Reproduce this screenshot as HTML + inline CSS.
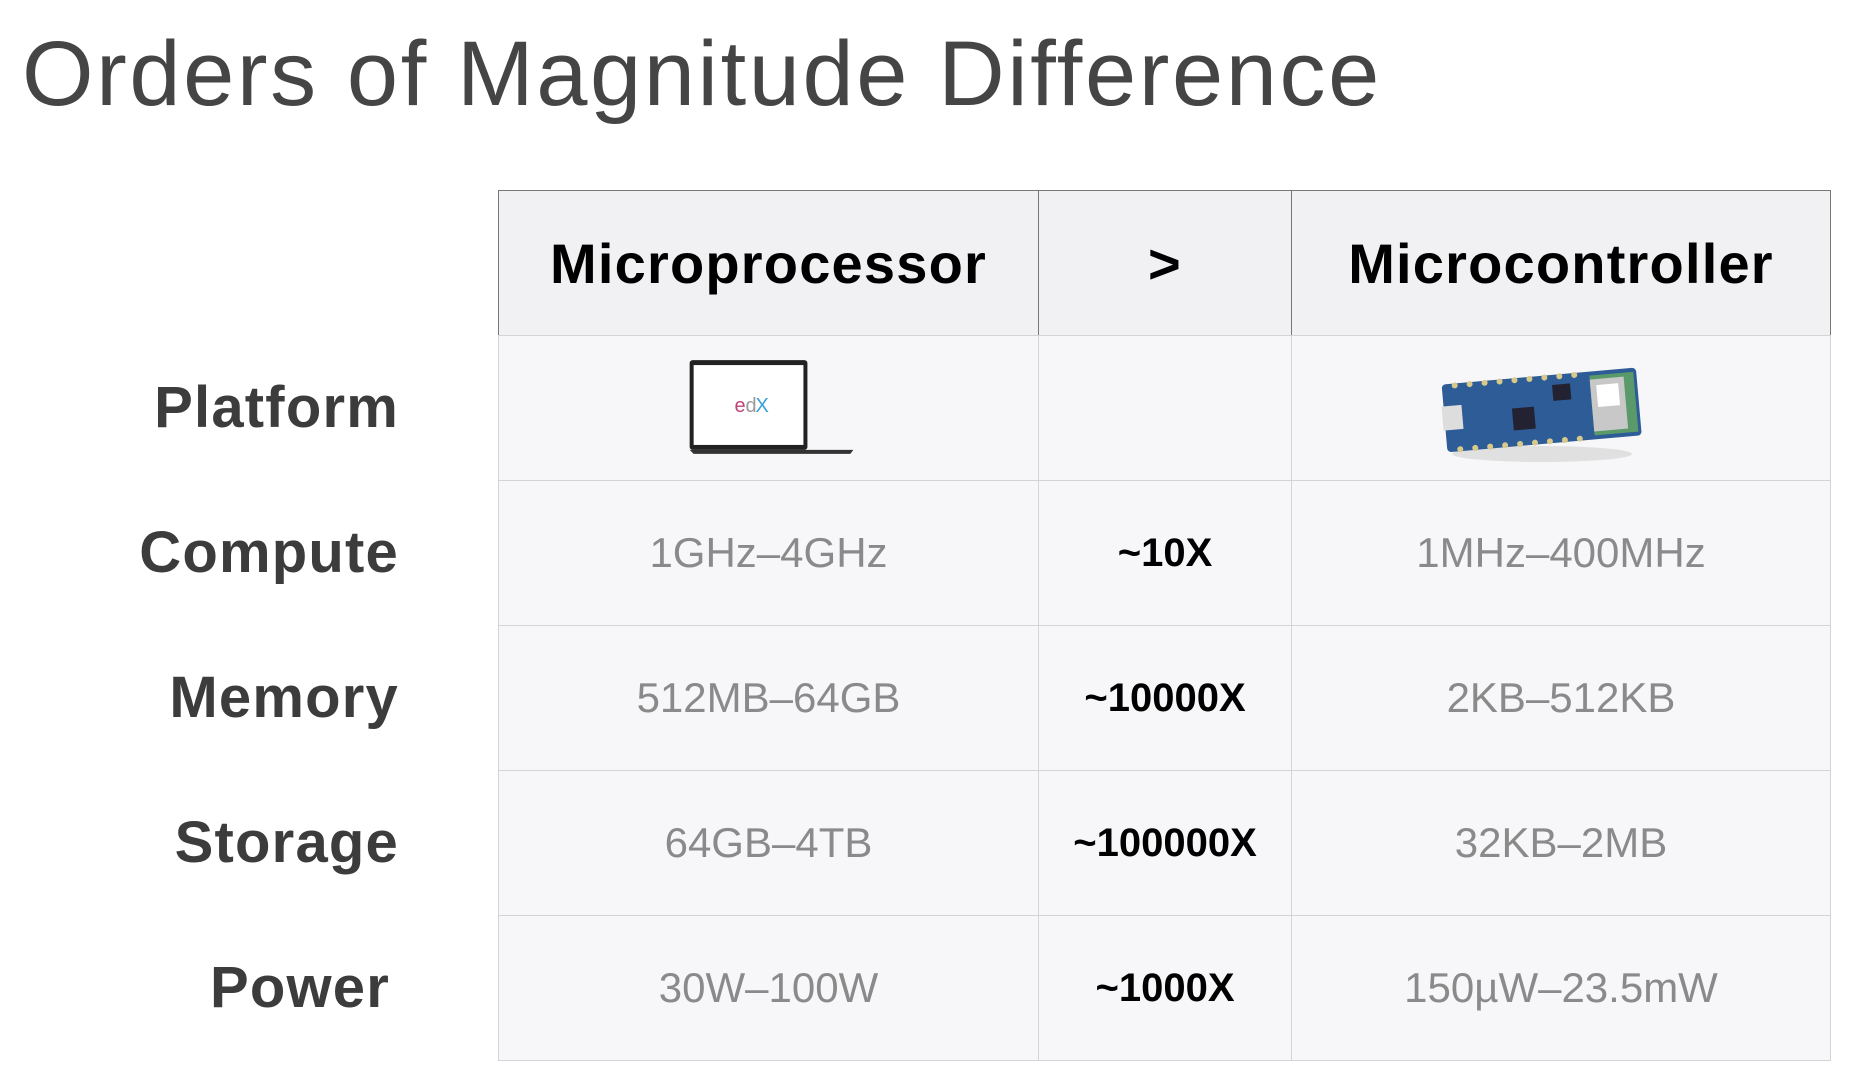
<!DOCTYPE html>
<html><head><meta charset="utf-8"><style>
*{margin:0;padding:0;box-sizing:border-box}
body{width:1867px;height:1088px;background:#fff;position:relative;overflow:hidden;font-family:"Liberation Sans",sans-serif}
.title{position:absolute;left:22px;top:22px;font-size:92px;color:#454545;letter-spacing:2.6px;white-space:nowrap}
.lbl{position:absolute;right:1468px;font-size:58px;font-weight:bold;color:#3c3c3c;height:145px;line-height:145px;letter-spacing:1.2px}
.c{position:absolute;display:flex;align-items:center;justify-content:center;background:#f7f7f9;border:1px solid #d4d4d6;font-size:42px;color:#8a8a8a}
.h{background:#f1f1f3;font-size:56px;font-weight:bold;color:#000;border:1px solid #777;letter-spacing:1.2px}
.m{color:#000;font-weight:bold;font-size:40px}
</style></head><body>
<div class="title">Orders of Magnitude Difference</div>
<div class="lbl" style="top:335px">Platform</div>
<div class="lbl" style="top:480px">Compute</div>
<div class="lbl" style="top:625px">Memory</div>
<div class="lbl" style="top:770px">Storage</div>
<div class="lbl" style="top:915px;right:1477px">Power</div>

<div class="c h" style="left:498px;top:190px;width:541px;height:146px">Microprocessor</div>
<div class="c h" style="left:1038px;top:190px;width:254px;height:146px">&gt;</div>
<div class="c h" style="left:1291px;top:190px;width:540px;height:146px">Microcontroller</div>

<div class="c" style="left:498px;top:335px;width:541px;height:146px">
<svg width="540" height="144" viewBox="0 0 540 144" style="display:block">
<rect x="191" y="24" width="118" height="90" rx="3" fill="#222"/>
<rect x="195" y="29" width="110" height="80" fill="#fff"/>
<path d="M191 114 L355 114 L352 118 L195 118 Z" fill="#333"/>
<text x="236" y="76" font-size="20" fill="#c0447a" font-family="Liberation Sans">e</text>
<text x="247" y="76" font-size="20" fill="#999" font-family="Liberation Sans">d</text>
<text x="257" y="76" font-size="20" fill="#3aa0d8" font-family="Liberation Sans">X</text>
</svg></div>
<div class="c" style="left:1038px;top:335px;width:254px;height:146px"></div>
<div class="c" style="left:1291px;top:335px;width:540px;height:146px">
<svg width="538" height="144" viewBox="0 0 538 144" style="display:block">
<ellipse cx="250" cy="118" rx="90" ry="8" fill="#e0e0e0"/>
<g transform="rotate(-5 249 72)">
<rect x="152" y="40" width="195" height="68" rx="4" fill="#2d5c96"/>
<rect x="300" y="44" width="44" height="60" fill="#5a9a6a"/>
<rect x="300" y="48" width="34" height="52" fill="#c8c8c8"/>
<rect x="306" y="54" width="22" height="22" fill="#fff"/>
<rect x="150" y="62" width="20" height="24" fill="#ddd"/>
<rect x="220" y="70" width="22" height="22" fill="#223"/>
<rect x="262" y="50" width="18" height="16" fill="#223"/>
<g fill="#d8c98a"><circle cx="165" cy="42" r="3"/><circle cx="180" cy="42" r="3"/><circle cx="195" cy="42" r="3"/><circle cx="210" cy="42" r="3"/><circle cx="225" cy="42" r="3"/><circle cx="240" cy="42" r="3"/><circle cx="255" cy="42" r="3"/><circle cx="270" cy="42" r="3"/><circle cx="285" cy="42" r="3"/>
<circle cx="165" cy="106" r="3"/><circle cx="180" cy="106" r="3"/><circle cx="195" cy="106" r="3"/><circle cx="210" cy="106" r="3"/><circle cx="225" cy="106" r="3"/><circle cx="240" cy="106" r="3"/><circle cx="255" cy="106" r="3"/><circle cx="270" cy="106" r="3"/><circle cx="285" cy="106" r="3"/></g>
</g></svg></div>

<div class="c" style="left:498px;top:480px;width:541px;height:146px">1GHz–4GHz</div>
<div class="c m" style="left:1038px;top:480px;width:254px;height:146px">~10X</div>
<div class="c" style="left:1291px;top:480px;width:540px;height:146px">1MHz–400MHz</div>

<div class="c" style="left:498px;top:625px;width:541px;height:146px">512MB–64GB</div>
<div class="c m" style="left:1038px;top:625px;width:254px;height:146px">~10000X</div>
<div class="c" style="left:1291px;top:625px;width:540px;height:146px">2KB–512KB</div>

<div class="c" style="left:498px;top:770px;width:541px;height:146px">64GB–4TB</div>
<div class="c m" style="left:1038px;top:770px;width:254px;height:146px">~100000X</div>
<div class="c" style="left:1291px;top:770px;width:540px;height:146px">32KB–2MB</div>

<div class="c" style="left:498px;top:915px;width:541px;height:146px">30W–100W</div>
<div class="c m" style="left:1038px;top:915px;width:254px;height:146px">~1000X</div>
<div class="c" style="left:1291px;top:915px;width:540px;height:146px">150µW–23.5mW</div>
</body></html>
